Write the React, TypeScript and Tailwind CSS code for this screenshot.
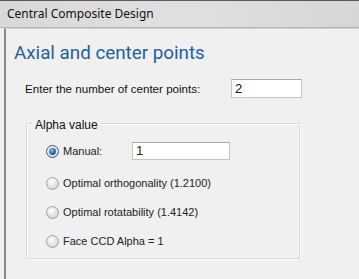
import React from "react";

function Radio({ checked }: { checked?: boolean }) {
  return (
    <svg width="13" height="13" viewBox="0 0 13 13" className="shrink-0">
      <defs>
        <radialGradient id={checked ? "rg1" : "rg0"} cx="40%" cy="35%" r="70%">
          <stop offset="0%" stopColor="#ffffff" />
          <stop offset="100%" stopColor="#d2d2d2" />
        </radialGradient>
        <radialGradient id="dot" cx="40%" cy="35%" r="70%">
          <stop offset="0%" stopColor="#8fc6f5" />
          <stop offset="60%" stopColor="#2a6fc0" />
          <stop offset="100%" stopColor="#163f7a" />
        </radialGradient>
      </defs>
      <circle cx="6.5" cy="6.5" r="6" fill={`url(#${checked ? "rg1" : "rg0"})`} stroke={checked ? "#3a5a85" : "#a0a0a0"} strokeWidth="1" />
      {checked && <circle cx="6.5" cy="6.5" r="3.4" fill="url(#dot)" />}
    </svg>
  );
}

export default function App() {
  const sans = { fontFamily: '"Liberation Sans", Arial, sans-serif' };
  return (
    <div className="w-[359px] h-[279px] bg-[#f0f0f0] overflow-hidden relative">
      <div
        className="h-[28px] border-t border-[#5a5a5a] border-b border-b-[#b5b5b5] bg-gradient-to-r from-[#d8d8d8] via-[#e0e0e0] to-[#d6d6d6] flex items-center pl-[7px] text-[12px] text-[#111]"
        style={{ fontFamily: '"Noto Sans", "Open Sans", sans-serif' }}
      >
        Central Composite Design
      </div>
      <div className="ml-[4px] h-[251px] border-l-2 border-[#8c8c8c] border-t border-t-[#d0d0d0] bg-[#f0f0f0] pl-[8px]">
        <div
          className="pt-[12px] text-[18.8px] leading-[24px] text-[#1f5ea8]"
          style={{ fontFamily: 'Roboto, "Noto Sans", sans-serif' }}
        >
          Axial and center points
        </div>
        <div className="mt-[14px] flex items-center text-[11.6px] text-[#111]" style={sans}>
          <span className="ml-[11px] w-[206px]">Enter the number of center points:</span>
          <div className="w-[71px] h-[19px] border border-[#c4c4c4] border-t-[#a8a8a8] bg-white flex items-center pl-[3px] text-[13px]">
            2
          </div>
        </div>
        <div className="relative ml-[12px] mt-[25px] w-[274px] h-[136px] border border-[#d8d8d8] shadow-[inset_1px_1px_0_#ffffff,1px_1px_0_#ffffff]">
          <div className="absolute -top-[8px] left-[5px] px-[3px] bg-[#f0f0f0] text-[12px] text-[#111]" style={sans}>
            Alpha value
          </div>
          <div className="pl-[19px] pt-[18px] flex flex-col text-[11px] text-[#222]" style={sans}>
            <div className="flex items-center h-[18px]">
              <Radio checked />
              <span className="ml-[4px] w-[69px]">Manual:</span>
              <div className="w-[98px] h-[18px] border border-[#c4c4c4] border-t-[#a8a8a8] bg-white flex items-center pl-[3px] text-[13px]">
                1
              </div>
            </div>
            <div className="flex items-center h-[18px] mt-[14px]">
              <Radio />
              <span className="ml-[4px]">Optimal orthogonality (1.2100)</span>
            </div>
            <div className="flex items-center h-[18px] mt-[11px]">
              <Radio />
              <span className="ml-[4px]">Optimal rotatability (1.4142)</span>
            </div>
            <div className="flex items-center h-[18px] mt-[11px]">
              <Radio />
              <span className="ml-[4px]">Face CCD Alpha = 1</span>
            </div>
          </div>
        </div>
      </div>
    </div>
  );
}
